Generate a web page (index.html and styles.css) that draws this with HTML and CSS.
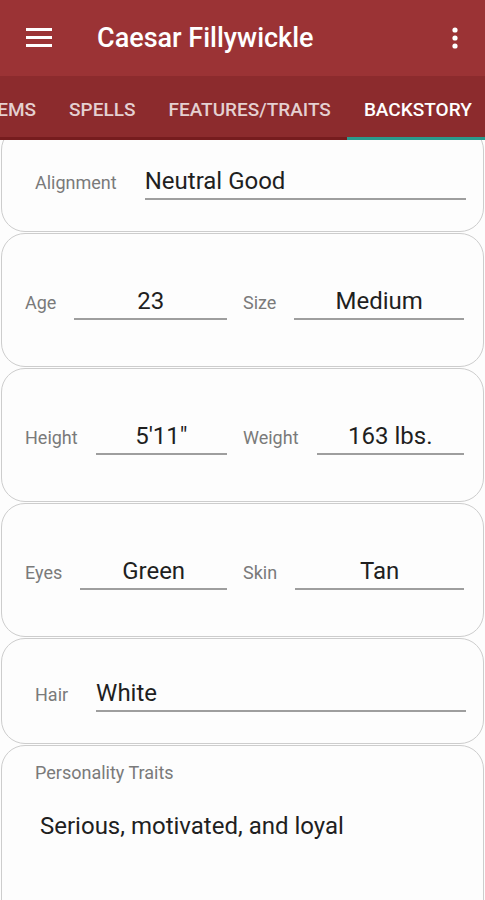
FILE: index.html
```html
<!DOCTYPE html>
<html lang="en">
<head>
<meta charset="utf-8">
<title>Caesar Fillywickle</title>
<link rel="stylesheet" href="styles.css">
</head>
<body>
<header class="appbar">
  <span class="icon menu" aria-label="Menu">
    <svg width="26" height="20" viewBox="0 0 26 20"><rect x="0" y="0" width="26" height="3" fill="#fff"/><rect x="0" y="8" width="26" height="3" fill="#fff"/><rect x="0" y="16" width="26" height="3" fill="#fff"/></svg>
  </span>
  <h1 class="title">Caesar Fillywickle</h1>
  <span class="icon more" aria-label="More">
    <svg width="6" height="22" viewBox="0 0 6 22"><circle cx="3" cy="3" r="2.6" fill="#fff"/><circle cx="3" cy="11" r="2.6" fill="#fff"/><circle cx="3" cy="19" r="2.6" fill="#fff"/></svg>
  </span>
</header>
<nav class="tabs">
  <div class="tab-row">
    <span class="tab">ITEMS</span>
    <span class="tab">SPELLS</span>
    <span class="tab">FEATURES/TRAITS</span>
    <span class="tab active">BACKSTORY</span>
  </div>
</nav>
<main class="content">
  <section class="card card-single first">
    <span class="label">Alignment</span>
    <span class="value left">Neutral Good</span>
  </section>
  <section class="card card-pair">
    <div class="field"><span class="label">Age</span><span class="value">23</span></div>
    <div class="field"><span class="label">Size</span><span class="value">Medium</span></div>
  </section>
  <section class="card card-pair">
    <div class="field"><span class="label">Height</span><span class="value">5'11"</span></div>
    <div class="field"><span class="label">Weight</span><span class="value">163 lbs.</span></div>
  </section>
  <section class="card card-pair">
    <div class="field"><span class="label">Eyes</span><span class="value">Green</span></div>
    <div class="field"><span class="label">Skin</span><span class="value">Tan</span></div>
  </section>
  <section class="card card-single">
    <span class="label">Hair</span>
    <span class="value left">White</span>
  </section>
  <section class="card card-text">
    <span class="label">Personality Traits</span>
    <p class="text">Serious, motivated, and loyal</p>
  </section>
</main>
</body>
</html>
```
FILE: styles.css
```css
html, body {
  margin: 0;
  padding: 0;
}
body {
  width: 485px;
  height: 900px;
  overflow: hidden;
  background: #fdfdfd;
  font-family: Roboto, "Noto Sans", "Liberation Sans", sans-serif;
}
.appbar {
  height: 76px;
  background: #9b3335;
  display: flex;
  align-items: center;
  padding-left: 26px;
  box-sizing: border-box;
}
.icon {
  display: flex;
}
.title {
  margin: 0 0 0 45px;
  font-size: 27px;
  font-weight: 500;
  color: #fff;
  letter-spacing: 0;
}
.more {
  margin-left: auto;
  margin-right: 27px;
}
.tabs {
  height: 64px;
  background: #8c2b2d;
  box-shadow: inset 0 -3px 0 #761c1e;
  overflow: hidden;
}
.tab-row {
  display: flex;
  height: 100%;
  margin-left: -36px;
}
.tab {
  display: flex;
  align-items: center;
  padding: 2px 16.5px 0;
  font-size: 19px;
  font-weight: 500;
  color: rgba(255, 255, 255, 0.78);
  white-space: nowrap;
}
.tab.active {
  color: #fff;
  box-shadow: inset 0 -3px 0 #2b9a8d;
}
.content {
  height: 760px;
  overflow: hidden;
}
.card {
  background: #fdfdfd;
  border: 1px solid #cdcdcd;
  border-radius: 24px;
  margin: 0 1px 1px;
  box-sizing: border-box;
}
.card.first {
  margin-top: -14px;
}
.card-single {
  height: 106px;
  display: flex;
  align-items: baseline;
  align-content: center;
  flex-wrap: wrap;
  padding: 8px 17px 0 33px;
  column-gap: 28px;
}
.card-pair {
  height: 134px;
  display: grid;
  grid-template-columns: 202px 221px;
  column-gap: 16px;
  align-items: center;
  padding: 6px 0 0 23px;
}
.field {
  display: flex;
  align-items: baseline;
  gap: 18px;
}
.label {
  font-size: 18px;
  line-height: 21px;
  color: #7a7a7a;
}
.value {
  flex: 1;
  min-width: 0;
  font-size: 24px;
  line-height: 28px;
  color: #1f1f1f;
  border-bottom: 2px solid #9e9e9e;
  padding-bottom: 3px;
  text-align: center;
}
.value.left {
  text-align: left;
}
.card-text {
  height: 200px;
  padding: 16px 0 0 33px;
}
.card-text .label {
  display: block;
}
.text {
  margin: 29px 0 0 5px;
  font-size: 24px;
  line-height: 28px;
  color: #1f1f1f;
}
```
